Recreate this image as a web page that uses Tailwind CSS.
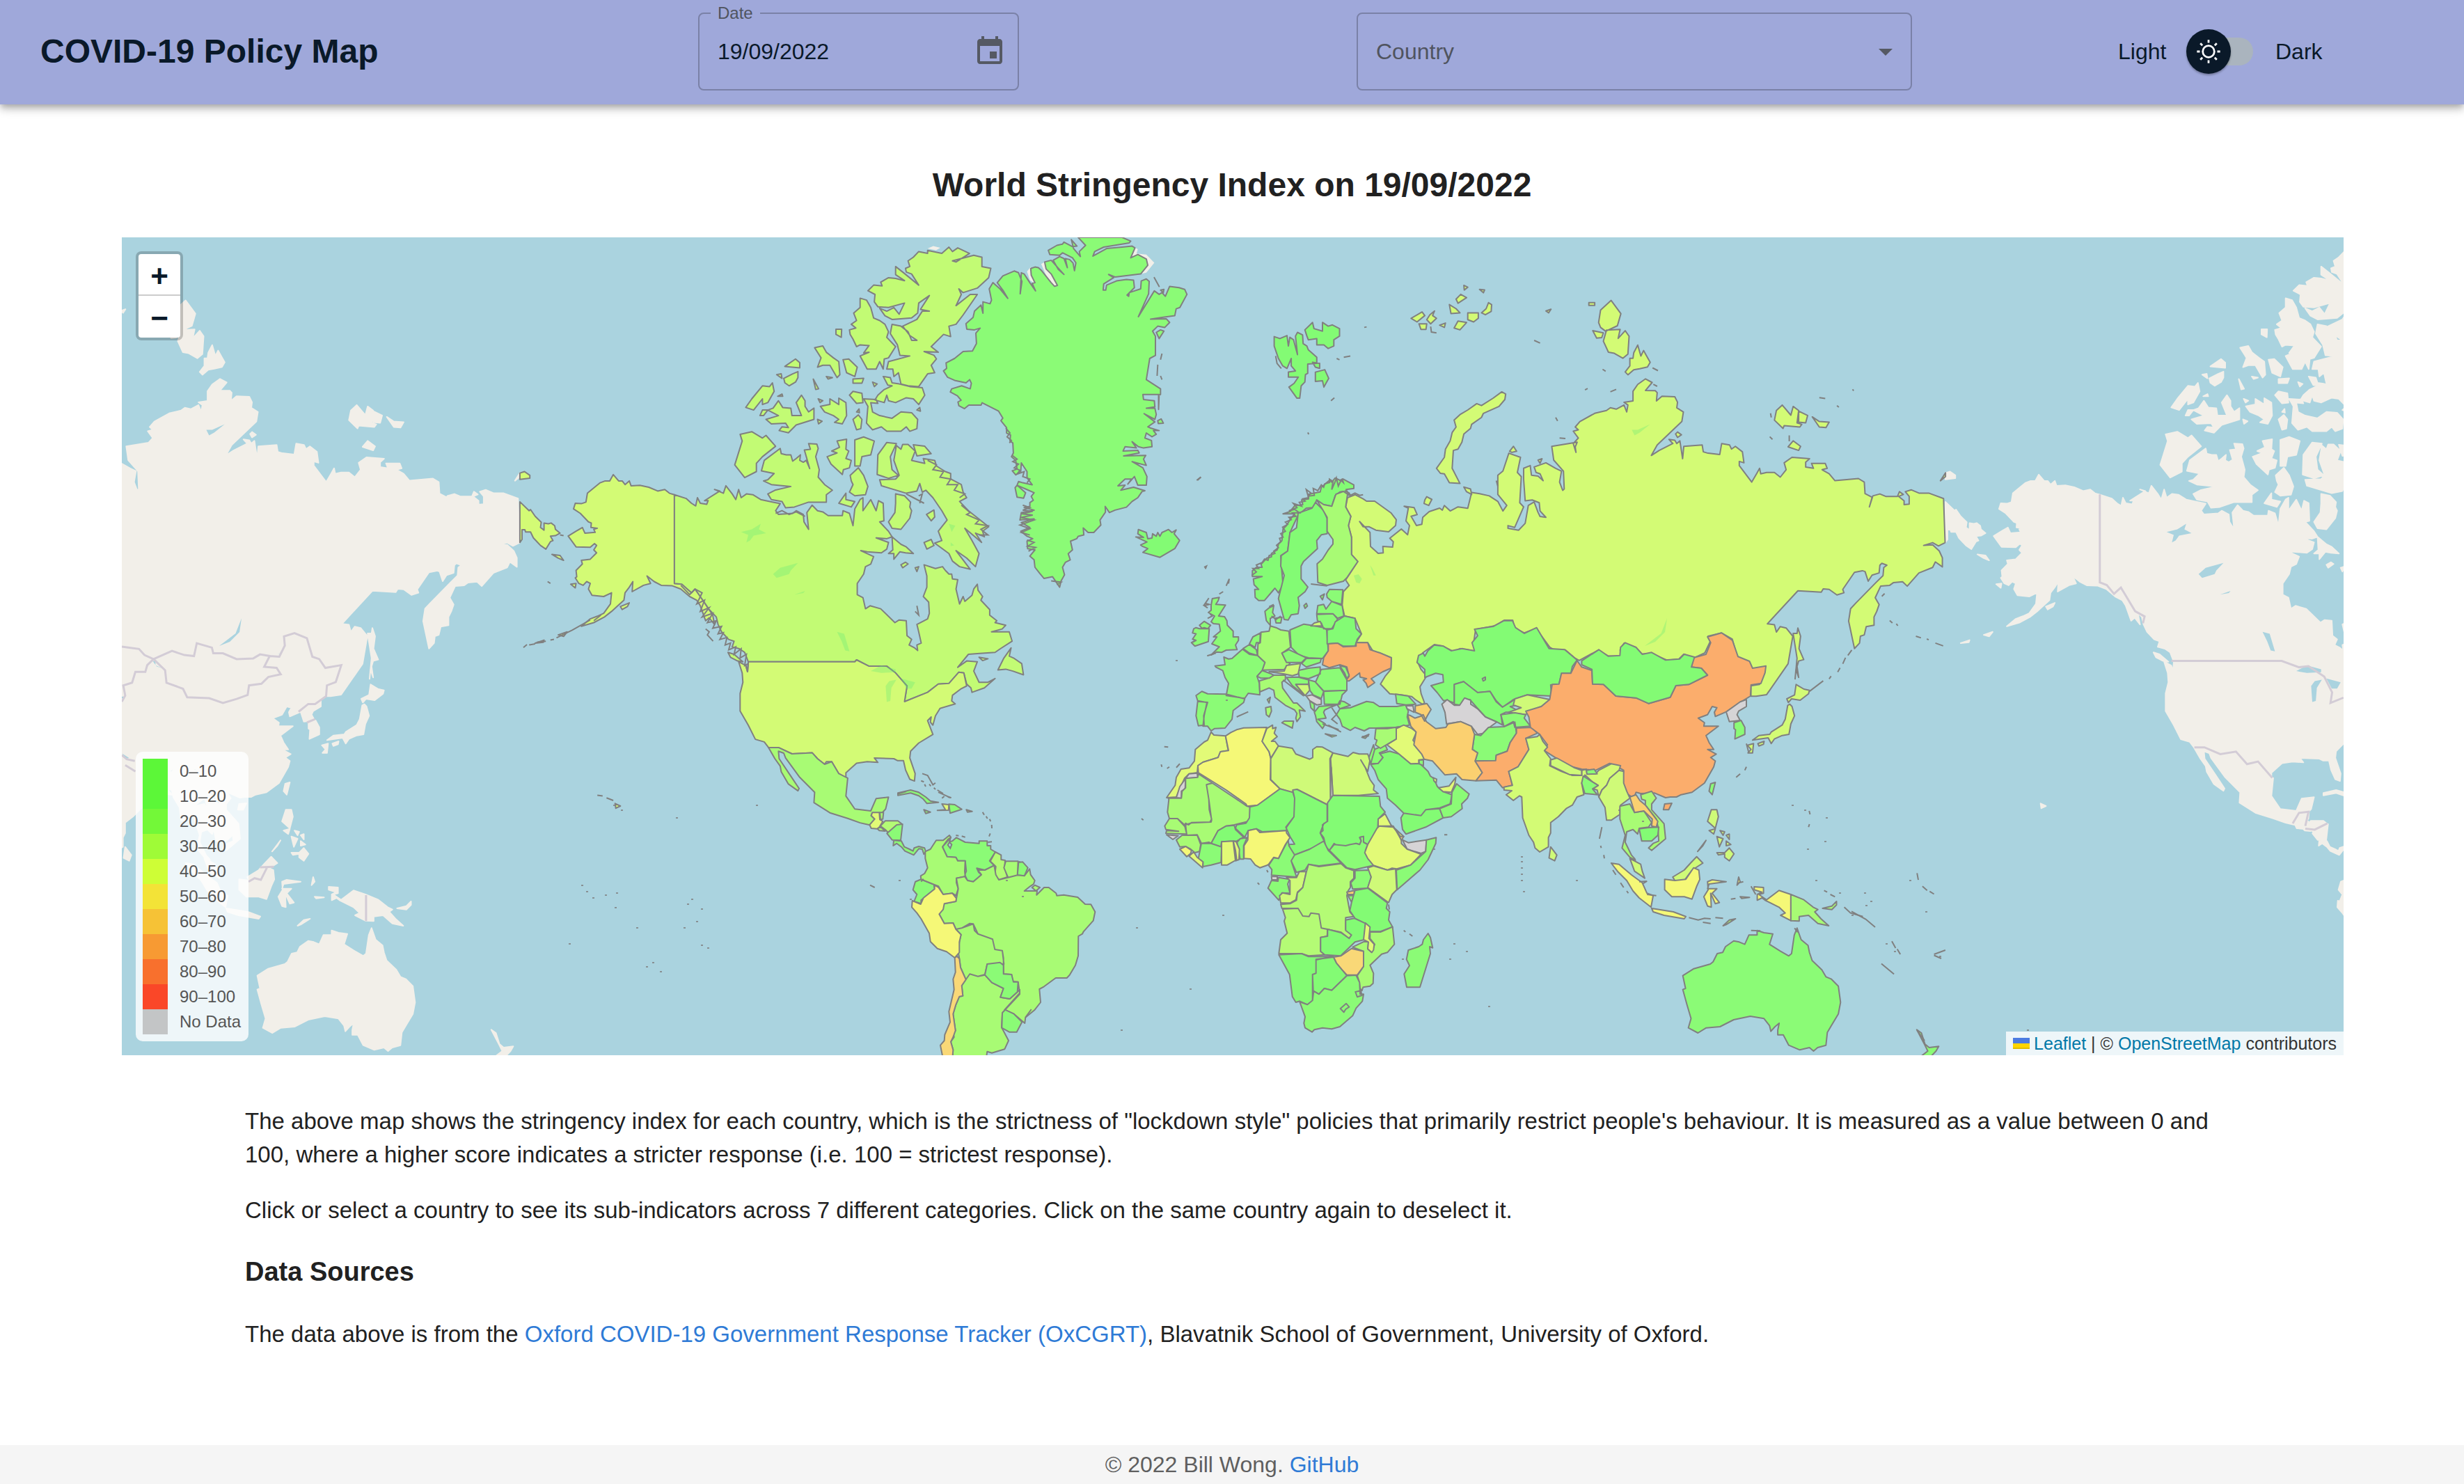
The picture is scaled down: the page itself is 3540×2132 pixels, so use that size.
<!DOCTYPE html>
<html lang="en">
<head>
<meta charset="utf-8">
<title>COVID-19 Policy Map</title>
<script src="https://cdn.jsdelivr.net/npm/@tailwindcss/browser@4"></script>
</head>
<body class="flex min-h-screen flex-col bg-white font-['Helvetica_Neue','Liberation_Sans',Arial,sans-serif] text-[32px] leading-[48px] text-[#212121]">

<header class="relative z-10 grid h-[150px] grid-cols-[945fr_946fr_1094fr_439fr] items-center bg-[#9fa8da] px-[58px] pb-[2px] text-[#0a1929] shadow-[0_4px_8px_-2px_rgba(0,0,0,0.2),0_8px_10px_rgba(0,0,0,0.14),0_2px_20px_rgba(0,0,0,0.12)]">
  <h1 class="text-5xl font-bold">COVID-19 Policy Map</h1>
  <fieldset class="mb-[18px] h-[123px] w-[461px] self-end rounded-lg border-2 border-black/23 pr-4 pl-4">
    <legend class="px-[10px] text-2xl leading-6 text-[#50545f]"><label for="date">Date</label></legend>
    <div class="flex h-[86px] items-center justify-between pl-[10px]">
      <input id="date" type="text" value="19/09/2022" class="w-[300px] bg-transparent outline-none">
      <button type="button" aria-label="Choose date" class="text-[#555963]">
        <svg class="size-12" viewBox="0 0 24 24" fill="currentColor"><path d="M17 12h-5v5h5v-5zM16 1v2H8V1H6v2H5c-1.11 0-1.99.9-1.99 2L3 19c0 1.1.89 2 2 2h14c1.1 0 2-.9 2-2V5c0-1.1-.9-2-2-2h-1V1h-2zm3 18H5V8h14v11z"/></svg>
      </button>
    </div>
  </fieldset>
  <div class="relative flex h-[112px] w-[798px] items-center rounded-lg border-2 border-black/23">
    <select aria-label="Country" class="h-full w-full appearance-none bg-transparent px-[26px] text-[#50545f] outline-none">
      <option>Country</option>
    </select>
    <svg class="pointer-events-none absolute right-3 size-12 text-[#555963]" viewBox="0 0 24 24" fill="currentColor"><path d="M7 10l5 5 5-5z"/></svg>
  </div>
  <div class="flex items-center">
    <span class="w-[98px]">Light</span>
    <label class="relative flex h-16 w-24 items-center">
      <input type="checkbox" aria-label="Dark mode" class="h-10 w-24 appearance-none rounded-full bg-[#aab4be]">
      <span class="absolute left-0 flex size-16 items-center justify-center rounded-full bg-[#0a1929] shadow-[0_2px_3px_rgba(0,0,0,0.3)]">
        <svg class="size-10" viewBox="0 0 20 20" fill="#fff"><path d="M9.305 1.667V3.75h1.389V1.667h-1.39zm-4.707 1.95l-.982.982L5.09 6.072l.982-.982-1.473-1.473zm10.802 0L13.927 5.09l.982.982 1.473-1.473-.982-.982zM10 5.139a4.872 4.872 0 00-4.862 4.86A4.872 4.872 0 0010 14.862 4.872 4.872 0 0014.86 10 4.872 4.872 0 0010 5.139zm0 1.389A3.462 3.462 0 0113.471 10a3.462 3.462 0 01-3.473 3.472A3.462 3.462 0 016.527 10 3.462 3.462 0 0110 6.528zM1.665 9.305v1.39h2.083v-1.39H1.666zm14.583 0v1.39h2.084v-1.39h-2.084zM5.09 13.928L3.616 15.4l.982.982 1.473-1.473-.982-.982zm9.82 0l-.982.982 1.473 1.473.982-.982-1.473-1.473zM9.305 16.25v2.083h1.389V16.25h-1.39z"/></svg>
      </span>
    </label>
    <span class="ml-8">Dark</span>
  </div>
</header>

<main class="flex-1">
  <h2 class="pt-[84px] text-center text-5xl leading-[64px] font-bold">World Stringency Index on 19/09/2022</h2>

  <section aria-label="World map" class="relative mt-[43px] mr-[173px] ml-[175px] h-[1175px] overflow-hidden bg-[#aad3df]">
    <svg id="map" class="block h-full w-full" viewBox="175 341 3192 1175" preserveAspectRatio="xMidYMid slice"></svg>

    <div class="absolute top-5 left-5 flex w-[68px] flex-col overflow-hidden rounded-lg border-4 border-black/20 bg-white bg-clip-padding text-[44px] font-bold text-[#0a1929]">
      <button type="button" aria-label="Zoom in" class="h-[60px] border-b-2 border-[#ccc] pt-1 leading-[56px]">+</button>
      <button type="button" aria-label="Zoom out" class="h-[60px] pt-1 leading-[56px]">−</button>
    </div>

    <div class="absolute bottom-5 left-5 flex w-[162px] flex-col rounded-[10px] bg-white/80 p-[10px] text-2xl leading-9 text-[#555]">
      <div class="flex gap-[17px]"><i class="size-9 bg-[#5cf738]"></i>0–10</div>
      <div class="flex gap-[17px]"><i class="size-9 bg-[#5cf738]"></i>10–20</div>
      <div class="flex gap-[17px]"><i class="size-9 bg-[#73f838]"></i>20–30</div>
      <div class="flex gap-[17px]"><i class="size-9 bg-[#9ffb37]"></i>30–40</div>
      <div class="flex gap-[17px]"><i class="size-9 bg-[#cefe36]"></i>40–50</div>
      <div class="flex gap-[17px]"><i class="size-9 bg-[#f3e337]"></i>50–60</div>
      <div class="flex gap-[17px]"><i class="size-9 bg-[#f6c236]"></i>60–70</div>
      <div class="flex gap-[17px]"><i class="size-9 bg-[#f79a33]"></i>70–80</div>
      <div class="flex gap-[17px]"><i class="size-9 bg-[#f8702d]"></i>80–90</div>
      <div class="flex gap-[17px]"><i class="size-9 bg-[#fa4728]"></i>90–100</div>
      <div class="flex gap-[17px] whitespace-nowrap"><i class="size-9 shrink-0 bg-[#c3c5c6]"></i>No Data</div>
    </div>

    <div class="absolute right-0 bottom-0 flex h-[34px] items-center gap-[6px] bg-white/80 px-[10px] text-[25px] leading-[34px] whitespace-nowrap text-[#333]">
      <svg class="h-4 w-6" viewBox="0 0 12 8"><path fill="#4C7BE1" d="M0 0h12v4H0z"/><path fill="#FFD500" d="M0 4h12v3H0z"/><path fill="#E0BC00" d="M0 7h12v1H0z"/></svg>
      <p><a href="#" class="text-[#0078a8]">Leaflet</a> | © <a href="#" class="text-[#0078a8]">OpenStreetMap</a> contributors</p>
    </div>
  </section>

  <section class="flex flex-col gap-8 pt-[71px] pr-[352px] pl-[352px] text-[33px]">
    <p>The above map shows the stringency index for each country, which is the strictness of "lockdown style" policies that primarily restrict people's behaviour. It is measured as a value between 0 and 100, where a higher score indicates a stricter response (i.e. 100 = strictest response).</p>
    <p>Click or select a country to see its sub-indicators across 7 different categories. Click on the same country again to deselect it.</p>
    <h3 class="mt-2 text-[38px] font-bold">Data Sources</h3>
    <p class="mt-[10px]">The data above is from the <a href="#" class="text-[#2f7bd6]">Oxford COVID-19 Government Response Tracker (OxCGRT)</a>, Blavatnik School of Government, University of Oxford.</p>
  </section>
</main>

<footer class="flex h-14 items-center justify-center bg-[#f5f5f5] text-[#5f5f5f]">
  <p>© 2022 Bill Wong. <a href="#" class="text-[#2f7bd6]">GitHub</a></p>
</footer>

<script>
// Survey sheets: origin and units per map pixel
const sheets = {
  3: [2218, 1060, 2.529, 3], 4: [700, 340, 1.96, 1.8667], 5: [1300, 340, 2.45, 2.8], 6: [1680, 640, 3, 3],
  7: [1640, 1020, 3, 3], 8: [1960, 400, 1.7818, 2.529], 9: [1980, 880, 2.24, 3], 10: [1240, 1120, 3, 3],
  11: [2660, 340, 2.2085, 1.3288], 12: [170, 340, 2.529, 2.063], 13: [170, 1060, 2.529, 3], 1: [0, 0, 0.44293, 0.44293]
};
const C = { c: '#c2fb74', u: '#d3fb75', g: '#8bfb76', m: '#a8fb74', s: '#83fb74', o: '#fbad6c', i: '#fbd070', y: '#f5f877', e: '#e2fa77', l: '#cffa78', n: '#d6d4d6', d: '#b4fb75', z: '#f9d877' };
// [fill key, sheet, outline]; "@n" changes sheet, "/" starts another outline
const countries = [
['u',4,`92,711 118,735 122,732 135,750 152,766 150,780 160,787 160,768 172,770 180,768 190,775 192,785 205,795 192,802 178,803 185,815 178,818 165,838 150,828 142,820 130,808 122,792 108,792 106,786 98,786 98,812 92,820 / 92,634 105,630 120,640 120,648 92,651`],
['u',4,`527,692 513,688 500,678 480,682 455,672 430,667 405,668 400,655 388,665 380,655 370,655 355,638 345,655 332,655 318,660 282,688 278,712 265,716 248,715 243,730 262,742 285,765 293,768 292,780 310,782 300,785 304,793 275,795 268,780 250,790 228,803 250,832 290,833 302,823 308,828 300,840 308,848 290,865 265,868 268,878 250,895 252,912 248,915 258,930 270,935 280,925 290,930 285,945 295,962 328,965 350,955 347,985 328,1010 310,1018 290,1025 265,1045 300,1035 330,1020 350,1005 365,992 385,975 388,955 400,940 410,925 408,952 440,935 460,930 450,910 470,925 490,935 520,936 545,945 570,965 590,975 600,990 615,1030 625,1022 640,1040 635,1015 600,965 585,945 575,955 548,932 527,930 / 375,992 400,982 395,992 380,1000 / 182,852 205,855 215,868 200,862 / 235,932 250,930 248,942 / 200,1068 225,1060 215,1072 / 135,1090 160,1082 158,1088 / 360,1520 375,1527 362,1533`],
['c',4,`527,692 560,702 575,715 587,722 592,700 600,715 618,718 622,708 612,708 655,682 640,678 665,688 672,668 690,690 700,705 708,678 715,700 730,690 748,692 770,705 805,712 825,716 812,735 820,745 860,742 870,735 890,745 892,765 905,785 900,740 915,720 930,735 945,738 960,748 1000,748 1002,735 1020,742 1030,775 1035,730 1050,705 1058,700 1058,735 1080,705 1095,735 1102,708 1115,715 1117,762 1105,765 1130,790 1140,805 1125,810 1095,808 1130,820 1125,838 1110,848 1070,845 1052,842 1088,858 1080,878 1065,885 1060,905 1042,930 1042,960 1058,968 1065,998 1078,990 1108,998 1148,1035 1160,1028 1180,1030 1182,1070 1195,1080 1188,1095 1202,1102 1212,1110 1210,1095 1222,1090 1215,1060 1210,1040 1240,1025 1245,1010 1243,980 1228,965 1238,940 1238,910 1230,880 1262,890 1282,885 1290,895 1300,905 1308,905 1310,918 1325,920 1320,945 1330,985 1340,965 1345,978 1365,962 1370,945 1380,932 1382,948 1395,965 1390,975 1415,1000 1415,1015 1435,1030 1430,1035 1460,1042 1450,1052 1420,1060 1470,1060 1478,1085 1445,1105 1430,1115 1380,1118 1355,1120 1325,1155 1350,1138 1380,1140 1370,1165 1385,1195 1410,1195 1430,1185 1400,1210 1365,1222 1362,1210 1350,1200 1342,1170 1328,1168 1300,1198 1270,1200 1240,1222 1175,1247 1182,1205 1150,1170 1125,1152 1075,1152 1040,1135 1035,1140 735,1140 725,1115 710,1105 690,1100 695,1085 680,1080 660,1060 650,1040 645,1020 625,1000 600,965 585,945 575,955 548,932 527,930`],
['c',4,`1178,85 1190,80 1185,65 1200,55 1215,40 1240,45 1240,37 1280,45 1300,28 1310,40 1325,30 1358,45 1320,68 1310,65 1370,50 1393,55 1393,80 1418,85 1412,110 1380,138 1340,150 1328,140 1335,155 1320,185 1360,155 1380,155 1340,210 1320,235 1300,240 1305,268 1285,262 1250,295 1270,310 1230,308 1258,318 1265,328 1250,345 1260,365 1240,368 1215,402 1185,400 1165,395 1158,365 1145,375 1142,355 1125,355 1130,335 1190,320 1162,318 1155,290 1135,260 1140,235 1165,240 1185,255 1195,278 1210,278 1190,265 1170,240 1210,222 1225,200 1245,200 1220,195 1245,158 1215,178 1212,205 1195,218 1140,222 1120,212 1105,192 1125,200 1145,190 1160,208 1175,178 1130,190 1100,188 1090,175 1092,155 1072,145 1088,130 1112,132 1108,122 1130,110 1150,112 1175,118 1150,102 1150,80 1170,95 1215,130 1195,100 1180,95 / 1050,165 1068,170 1080,190 1088,218 1105,225 1120,235 1130,255 1125,270 1150,295 1130,325 1118,328 1115,355 1105,335 1095,355 1070,355 1050,320 1075,310 1060,312 1075,292 1050,290 1040,295 1030,275 1022,262 1020,250 1038,245 1025,235 1040,225 1032,205 1050,190`],
['c',4,`1100,425 1118,410 1140,400 1128,398 1115,375 1135,378 1140,392 1160,395 1190,402 1225,405 1232,425 1215,450 1200,435 1180,432 1150,445 1130,440 1125,425 1118,445 1092,438 / 1060,435 1095,437 1100,447 1080,445 1085,470 1105,480 1140,487 1165,470 1195,472 1212,490 1210,515 1190,522 1180,510 1165,522 1125,522 1110,510 1085,518 1068,500 1072,455 / 1020,425 1030,415 1055,420 1058,445 1040,447 / 1030,490 1045,478 1055,490 1052,515 1040,518 / 938,455 965,450 965,435 990,450 990,433 1010,445 1012,480 1000,502 978,498 990,490 975,480 950,470 / 785,490 820,480 790,465 805,460 820,440 832,458 855,460 858,480 885,480 870,445 885,425 895,440 895,455 905,470 920,460 920,490 870,505 848,526 822,520 830,510 848,512 840,500 800,502 / 728,458 745,435 775,400 795,402 803,392 808,415 790,445 775,450 775,435 750,465 / 768,480 775,465 790,465 778,480 / 838,348 868,328 880,338 880,352 / 835,380 860,368 875,362 875,378 868,390 850,400 838,392 / 815,370 828,368 830,380 / 922,298 945,293 955,310 975,325 990,335 993,370 985,378 965,345 945,345 930,350 940,325 / 1002,330 1018,328 1042,350 1035,375 1012,365 / 982,248 998,248 997,270 982,262 / 1030,382 1060,380 1055,393 1030,393 / 918,382 933,408 925,410 / 955,375 972,378 960,382 / 1085,390 1098,395 1090,402 / 932,435 945,440 937,445 / 930,490 943,495 933,502 / 818,428 830,422 832,428 / 1040,470 1047,462 1048,472 / 1210,465 1218,458 1220,468`],
['c',4,`712,530 745,523 775,540 785,533 812,562 775,590 758,608 758,630 725,646 697,612 718,548 / 825,568 828,582 842,585 855,585 860,602 870,595 882,585 880,600 890,605 898,600 908,622 893,572 910,570 905,555 928,556 932,568 925,590 935,625 932,645 950,665 972,680 955,692 955,712 905,712 865,725 840,727 830,710 800,705 790,690 810,680 855,670 800,665 778,655 790,652 808,635 772,628 780,600 / 985,548 1012,543 1010,570 1018,575 1010,595 1025,600 1020,620 1003,625 1000,638 968,610 957,590 985,580 970,575 992,565 / 1035,545 1060,537 1090,548 1080,585 1055,590 1050,615 1035,615 / 1022,640 1045,620 1060,640 1072,670 1065,692 1035,695 1020,685 1030,665 1025,655 / 990,715 1010,688 1010,705 1035,710 1025,725`],
['c',4,`1152,560 1165,570 1170,557 1185,557 1205,575 1195,600 1232,608 1228,595 1260,600 1265,615 1290,630 1305,635 1305,650 1335,665 1340,685 1350,700 1330,710 1355,735 1375,750 1412,778 1395,790 1400,805 1375,795 1392,820 1345,782 1365,815 1385,850 1375,885 1350,862 1320,842 1360,892 1330,885 1310,870 1300,850 1260,822 1280,815 1270,790 1295,760 1280,735 1255,700 1235,680 1225,685 1218,662 1210,682 1180,688 1110,668 1105,652 1150,650 1160,640 1145,600 / 1100,585 1125,552 1152,555 1135,590 1140,625 1158,640 1130,648 1098,638 / 1200,558 1232,562 1250,582 1210,588 / 1150,690 1175,695 1192,712 1190,725 1195,735 1190,755 1165,785 1140,782 1130,765 1148,740 1150,715 / 1140,805 1165,825 1180,832 1200,850 1178,848 1162,845 1145,865 1145,850 1130,850 1142,840 / 1165,880 1178,873 1185,878 1170,888 / 1237,745 1258,733 1260,752 1250,762 / 1230,820 1250,812 1258,828 1238,838 / 1205,888 1215,885 1210,898 / 1475,1103 1470,1125 1482,1130 1505,1145 1510,1175 1480,1165 1460,1160 1438,1162 1455,1130 / 1385,1128 1410,1132 1395,1137 / 678,1115 695,1120 720,1140 705,1138 685,1128`],
['u',4,`735,1140 1035,1140 1040,1135 1075,1152 1125,1152 1150,1170 1182,1205 1175,1247 1240,1222 1270,1200 1300,1198 1328,1168 1342,1170 1350,1205 1335,1212 1310,1230 1308,1245 1318,1253 1275,1265 1262,1285 1255,1310 1248,1302 1250,1288 1240,1298 1245,1310 1255,1335 1215,1358 1192,1380 1190,1398 1205,1440 1203,1460 1190,1455 1178,1430 1172,1405 1155,1405 1145,1400 1090,1398 1100,1410 1070,1408 1040,1412 1010,1438 1010,1452 990,1440 970,1408 955,1408 950,1415 930,1400 915,1384 858,1387 820,1370 792,1370 780,1355 755,1348 735,1310 712,1272 712,1225 720,1195 718,1170 708,1140 728,1150 733,1165`],
['m',4,`792,1370 820,1370 858,1387 915,1384 930,1400 950,1415 970,1408 990,1440 1015,1452 1010,1500 1035,1535 1080,1540 1095,1507 1130,1503 1122,1535 1112,1545 1084,1545 1081,1553 1091,1562 1077,1578 1050,1572 1015,1560 965,1545 920,1518 922,1490 880,1450 840,1398 835,1385 820,1380 822,1400 850,1440 878,1480 875,1486 848,1468 828,1435 825,1420 810,1400`],
['g',5,`610,3 636,35 614,60 618,80 594,48 586,12 606,38 590,40 560,22 555,30 535,35 505,55 510,72 545,75 555,65 590,85 602,105 597,137 592,106 580,92 565,88 572,125 560,88 545,80 522,95 540,132 560,152 515,95 492,102 497,130 515,150 537,196 527,200 515,185 480,135 470,125 458,122 443,128 445,155 458,185 448,188 460,218 440,185 420,150 410,145 406,230 412,180 400,145 385,138 345,158 325,185 345,215 362,248 335,210 310,185 297,210 305,255 300,270 275,262 275,308 268,275 245,300 240,325 215,350 218,372 245,375 265,368 250,388 252,430 238,460 205,462 175,490 145,508 147,530 136,540 150,565 175,578 215,588 228,575 234,590 230,612 200,600 165,612 160,625 185,640 198,658 187,665 190,680 210,692 225,678 268,678 272,668 330,702 345,730 338,740 358,768 358,790 372,798 370,822 380,830 382,870 375,885 390,900 395,935 378,942 390,958 408,945 410,910 430,945 430,970 448,998 415,990 400,985 395,1000 425,1015 455,1030 445,1045 452,1060 440,1070 440,1085 420,1090 455,1100 410,1110 405,1140 455,1135 410,1150 440,1170 408,1185 430,1205 450,1215 430,1225 432,1255 458,1260 440,1285 455,1300 458,1330 475,1355 490,1375 520,1368 530,1385 545,1410 550,1385 562,1360 555,1330 565,1310 582,1300 575,1275 590,1260 583,1225 605,1215 610,1205 630,1200 628,1172 645,1190 665,1190 690,1160 687,1140 706,1108 705,1085 720,1110 740,1100 780,1088 800,1065 820,1050 835,1025 845,1022 805,1008 760,1020 775,1000 750,1002 775,975 798,975 785,995 808,965 820,1000 850,1000 852,965 838,930 800,905 850,920 840,895 848,880 770,882 825,870 820,860 768,862 775,845 815,850 800,825 822,845 840,850 870,845 868,820 845,810 850,790 870,805 885,795 875,780 895,780 865,770 855,765 880,745 842,712 880,735 885,715 880,690 850,690 880,685 878,660 840,655 838,635 895,635 893,695 893,638 900,635 900,612 850,575 862,490 882,478 882,400 872,380 890,360 915,365 932,345 920,330 865,332 905,325 950,318 955,290 968,285 993,232 985,212 965,205 932,200 917,240 905,225 895,232 878,218 822,322 858,230 860,180 850,170 832,178 830,210 790,225 788,240 782,235 808,205 805,175 780,172 745,178 710,195 707,215 698,215 700,190 735,165 717,152 740,162 830,150 855,115 850,90 820,72 795,85 810,45 800,38 765,42 710,48 662,78 668,60 700,42 790,25 795,18 765,3 / 885,385 900,375 912,380 895,410 / 388,1010 395,1000 425,1030 418,1052 395,1048 / 900,215 912,212 910,225 / 878,165 895,200 / 890,740 902,733 910,750 892,752`],
['s',5,`813,1208 840,1210 820,1195 822,1178 850,1190 855,1215 870,1212 872,1195 885,1205 890,1190 898,1205 905,1190 928,1178 940,1190 955,1180 948,1195 967,1222 950,1255 898,1290 838,1270 855,1255 835,1245 830,1240 852,1228 / 1300,402 1320,410 1345,398 1350,440 1355,405 1368,415 1382,475 1375,400 1382,385 1400,395 1402,430 1415,440 1420,455 1450,485 1450,510 1418,512 1418,550 1410,555 1408,585 1395,600 1390,650 1380,650 1352,605 1370,590 1385,565 1350,565 1350,545 1375,540 1360,520 1360,490 1345,530 1330,520 1315,490 1300,440 / 1408,375 1435,345 1440,370 1470,380 1470,345 1490,360 1505,355 1530,370 1530,400 1510,415 1510,440 1490,450 1475,435 1450,435 1450,410 1420,415 1415,400 / 1445,545 1478,535 1492,570 1475,605 1470,580 1445,582 / 1435,505 1460,510 1460,530 1445,525`],
['u',6,`768,225 800,212 835,230 850,240 885,240 955,290 978,320 975,345 945,372 890,365 860,350 835,350 820,328 865,375 867,435 900,465 922,463 920,435 962,438 965,415 950,400 1000,360 1027,385 1035,345 1020,325 1030,270 1012,262 1055,268 1068,298 1042,305 1065,345 1088,340 1092,310 1120,285 1165,270 @8 200,842 205,825 220,845 240,830 265,835 275,778 295,782 320,790 342,810 355,845 365,825 342,785 342,715 355,700 370,635 400,650 392,705 402,720 398,815 408,830 385,905 368,898 368,908 395,915 412,890 420,825 435,812 445,850 450,865 465,868 450,845 448,815 430,805 412,808 408,730 408,690 425,680 428,715 445,718 458,735 450,710 440,705 435,685 465,670 490,690 505,700 500,740 508,770 512,765 510,700 485,660 480,610 545,595 540,612 542,632 535,600 548,580 535,555 548,550 540,540 552,520 590,490 620,480 630,470 645,475 665,460 672,485 675,460 665,450 688,445 688,410 700,385 720,365 737,378 720,407 745,408 750,415 748,445 762,428 795,430 802,450 800,470 817,485 813,520 750,605 735,643 755,625 790,600 780,585 795,588 800,600 808,590 815,655 818,610 865,605 868,630 880,635 910,640 915,600 935,605 940,620 950,610 968,630 972,670 960,665 960,680 992,740 1005,708 1012,690 1015,710 1030,705 1050,705 1065,722 1080,695 1075,670 1095,650 1140,655 1130,668 1130,685 1150,690 1145,672 1180,672 1185,690 1172,695 1190,710 1205,735 1265,727 1280,740 1282,782 1300,795 1293,830 1302,790 1320,783 1335,792 1365,792 1370,775 1380,785 1368,792 1382,808 1382,822 1395,820 1395,792 1385,775 1400,768 1420,780 1445,780 1483,800 1487,960 1470,972 1455,960 1432,970 1455,968 1472,990 1480,1015 1480,1048 1462,1030 1455,1050 1420,1070 1390,1118 1378,1102 1355,1105 1345,1115 1322,1118 1308,1160 1318,1185 1312,1210 1305,1230 1305,1260 1285,1265 1280,1295 1270,1300 1268,1325 1255,1345 1240,1245 1245,1200 1258,1180 1310,1105 1328,1080 1330,1050 1338,1042 1325,1035 1320,1042 1318,1070 1300,1078 1290,1100 1282,1065 1275,1062 1255,1068 1225,1130 1228,1142 1210,1150 1190,1130 1175,1128 1170,1140 1148,1138 1110,1135 1032,1255 1050,1258 1055,1285 1065,1265 1080,1270 1097,1300 1085,1400 1030,1512 1003,1518 990,1518 990,1480 1012,1475 1025,1415 992,1418 985,1392 955,1375 942,1310 915,1288 880,1300 888,1312 872,1360 845,1378 818,1365 805,1383 775,1387 735,1362 710,1365 695,1340 665,1325 655,1350 658,1372 625,1372 600,1350 550,1388 540,1380 515,1350 485,1348 475,1340 440,1272 410,1288 385,1270 380,1242 358,1242 335,1262 285,1275 280,1325 288,1355 245,1345 228,1355 200,1335 180,1330 150,1360 137,1395 145,1420 160,1445 @6 1105,1000 1080,1040 1085,1070 1100,1110 1090,1115 1060,1095 1045,1082 1000,1075 950,1070 910,1028 930,995 955,965 957,915 905,893 880,890 855,850 805,850 828,812 800,745 755,735 745,690 750,630 775,603 760,580 812,500 785,470 785,395 772,345 782,305 760,265`],
['u',8,`185,690 205,650 208,620 220,590 225,560 235,540 230,515 245,495 265,478 288,455 300,462 330,435 352,412 362,420 360,440 345,465 305,490 300,505 275,530 272,545 255,565 250,595 240,620 228,625 225,690 245,745 218,742 205,710 195,708 / 632,80 657,128 648,172 618,192 605,178 600,160 605,115 / 620,188 655,185 650,218 668,190 678,210 675,275 662,290 640,272 625,268 612,228 / 700,242 708,282 715,262 732,305 725,322 705,328 690,332 675,350 668,340 680,318 680,290 688,290 690,270 / 585,190 612,198 608,215 595,217 / 1070,460 1092,497 1098,465 1112,480 1108,525 1120,530 1115,540 1075,535 1072,545 1050,515 1055,480 / 1112,482 1135,498 1130,525 1112,522 / 1147,503 1165,520 1190,522 1182,542 1165,540 / 1085,612 1098,590 1117,610 1112,625 / 265,125 292,125 292,145 280,158 265,150 / 300,125 312,110 318,88 326,95 325,120 310,132 / 120,145 148,122 155,135 135,158 / 140,165 160,165 158,185 145,185 / 160,150 168,132 180,118 175,135 185,145 170,165 / 230,180 240,155 262,160 245,187 / 235,75 247,58 262,70 240,90 / 218,95 235,110 245,125 222,128 / 193,170 208,162 205,178 / 255,25 265,32 256,42 / 295,40 308,42 305,52 / 465,118 478,112 472,125 / 575,88 590,88 590,98 575,98 / 155,805 160,793 173,803 165,825 153,818 / 1098,1290 1108,1290 1110,1270 1117,1300 1113,1345 1125,1385 1112,1390 1108,1410 1112,1450 1105,1420 1103,1455 1108,1380 / 1488,706 1488,720 1475,735 / 255,758 272,765 275,785 262,775 / 372,628 382,610 390,628 378,632 / 797,565 802,558 812,568 802,578 / 445,660 455,655 450,672`],
['s',6,`370,655 368,620 385,620 365,600 362,575 400,565 358,565 358,540 375,525 400,525 395,512 420,485 440,480 440,465 465,450 470,425 485,410 490,360 505,345 520,320 540,295 490,295 520,285 540,260 575,255 570,235 600,230 600,210 650,200 655,180 690,150 700,158 715,140 735,150 750,145 795,170 795,185 762,190 775,215 750,198 735,200 715,215 700,262 665,255 635,235 620,268 590,270 555,300 520,375 510,455 480,475 485,545 490,600 470,635 455,615 410,668 385,668`],
['s',6,`555,292 615,270 630,245 665,280 680,315 680,380 655,385 635,410 638,445 578,500 568,520 568,575 597,610 585,630 555,655 560,690 555,725 525,730 512,752 495,750 470,660 475,640 485,600 495,560 480,520 482,475 510,455 520,375 548,355 / 580,690 590,680 595,692 585,702`],
['m',6,`635,235 665,255 700,262 718,210 750,198 768,210 760,265 782,305 772,345 785,395 785,470 812,500 765,570 750,585 680,603 640,590 637,510 660,490 685,450 705,425 705,405 680,370 680,310 660,275`],
['g',6,`412,715 430,700 450,690 445,720 455,735 435,745 435,775 418,755 / 455,745 485,740 480,765 460,765 / 678,640 690,620 748,622 742,685 700,672 680,655 / 640,690 665,685 675,705 700,672 745,690 752,735 725,745 705,725 635,725 / 635,728 705,725 725,748 700,790 665,790 655,765 638,755 / 520,795 580,770 610,775 665,785 678,795 682,845 685,885 660,918 600,915 560,905 525,870 / 650,650 668,640 660,665`],
['s',6,`680,795 705,790 715,760 755,735 800,745 805,790 828,812 810,835 800,865 750,865 725,852 680,855`],
['u',6,`610,778 625,765 650,758 658,778`],
['o',6,`685,855 725,852 750,868 805,865 805,850 855,850 865,880 905,893 957,915 955,960 920,975 870,1005 885,1022 855,1043 848,1025 835,1010 850,1005 822,998 820,980 795,1000 775,1015 760,1015 775,995 765,955 735,945 690,958 660,945 665,915 685,885`],
['m',6,`395,805 430,800 435,778 460,785 480,795 515,800 522,870 485,895 500,925 520,940 495,965 400,968 412,935 380,905 382,855 392,850`],
['g',6,`345,855 360,825 392,808 390,850 375,850 370,870 / 318,875 345,858 375,880 380,905 345,895 / 197,950 240,945 235,912 255,920 270,918 315,878 345,900 380,905 412,935 400,970 378,995 388,1025 390,1075 340,1068 325,1090 245,1078 255,1025 240,1000 230,970 200,955 / 115,1078 140,1060 165,1070 245,1072 325,1092 320,1108 275,1142 270,1180 240,1218 195,1220 180,1230 165,1210 145,1210 150,1165 162,1108 122,1100 / 122,1103 165,1107 148,1165 150,1205 125,1208 115,1165 / 185,660 215,655 210,670 200,685 242,688 225,715 212,735 238,738 248,755 250,775 275,800 275,825 298,825 298,840 285,860 292,880 245,882 225,892 205,890 180,903 215,868 183,855 205,825 190,825 220,800 215,770 190,768 180,760 195,735 168,720 180,710 180,690 / 105,790 115,785 130,790 150,790 172,790 168,845 110,865 95,850 115,840 100,835 115,812 100,808 / 130,775 150,758 178,775 165,790 150,785 140,788`],
['m',6,`388,1015 420,1005 450,990 500,990 500,1010 485,1020 488,1045 535,1110 550,1110 585,1145 560,1140 565,1170 550,1190 545,1175 550,1155 540,1140 500,1120 455,1085 450,1055 430,1045 390,1062 / 485,1195 495,1188 535,1188 530,1218 / 415,1130 438,1125 440,1145 430,1170 418,1160 / 422,1095 435,1085 430,1110`],
['g',6,`378,995 400,970 440,985 450,990 430,1003 395,1003 / 485,895 515,880 590,915 570,935 505,935 / 570,940 590,918 655,918 650,935 590,955 / 555,970 600,960 650,955 650,985 600,1005 560,998 / 655,965 735,958 765,1010 765,1055 665,1058 630,1020 / 735,950 760,955 775,990 765,1005 755,980 / 665,1060 765,1055 745,1075 740,1095 735,1115 668,1115 / 600,1010 628,1018 665,1060 655,1090 620,1075 605,1055 / 505,1000 555,998 600,1010 600,1028 545,1030 580,1075 530,1035 / 605,1100 625,1115 625,1145 610,1130 / 625,1150 645,1125 720,1118 690,1130 670,1140 665,1150 675,1175 640,1180 665,1195 672,1200 660,1220 635,1190 630,1165 / 672,1243 695,1248 720,1250 700,1256 / 725,1120 735,1100 755,1105 780,1120 735,1135`],
['l',6,`430,975 495,972 505,948 565,940 555,985 530,992 495,985 / 545,1030 600,1030 605,1055 585,1078`],
['n',6,`590,1080 615,1075 655,1095 655,1115 635,1118 605,1100`],
['g',6,`735,1135 780,1130 850,1103 880,1108 905,1125 980,1125 1018,1118 1030,1145 1025,1170 1035,1205 975,1215 885,1218 862,1218 840,1230 800,1215 780,1228 745,1210 735,1180 720,1160 / 830,1258 860,1245 845,1262 / 975,1072 1030,1080 1062,1115 1020,1118 980,1112`],
['n',6,`1020,1122 1050,1122 1055,1150 1025,1135`],
['e',7,`300,95 312,108 362,112 372,165 375,175 340,180 330,205 265,225 243,240 240,270 205,275 185,295 150,375 108,378 145,325 150,290 170,255 205,250 228,220 232,170 270,138 285,130`],
['n',7,`240,272 242,292 190,295 188,340 172,350 172,380 150,378 165,330 205,275`],
['y',7,`362,112 385,97 410,85 440,77 540,75 520,135 550,180 557,210 555,300 597,340 500,410 455,415 450,405 365,345 245,270 243,240 265,225 330,205 340,180 375,175`],
['e',7,`540,80 565,65 565,80 580,75 572,100 585,115 560,135 575,135 590,155 557,208 550,180 520,135`],
['l',7,`590,155 650,165 665,190 725,212 738,205 738,170 755,158 780,160 825,185 812,210 815,400 800,408 670,342 645,355 597,340 557,300 557,210`],
['l',7,`825,185 890,200 912,183 938,190 975,190 985,215 975,265 960,240 945,215 965,250 985,300 1003,325 1000,345 1020,360 935,368 825,368 815,210`],
['n',7,`815,240 818,250 825,370 818,400 815,400`],
['m',7,`190,295 242,290 245,275 305,315 280,322 290,385 292,430 302,470 295,483 215,485 203,495 190,488 185,500 155,468 120,468 112,440 118,385 115,380 172,380 175,350 190,335 / 305,315 280,322 290,385 302,475 300,483 215,487 190,495 195,540 240,538 258,575 290,570 300,575 330,520 365,500 400,495 460,480 468,465 467,418 455,415 400,378 / 100,500 120,468 155,468 185,495 195,535 105,532 108,520 160,523 105,515 / 150,560 175,540 240,540 255,580 250,610 230,615 212,600 190,588 165,590`],
['s',7,`467,418 500,410 597,340 652,355 660,380 657,460 625,505 625,520 520,525 495,512 460,520 445,548 405,510 410,495 450,488 465,465 / 652,345 670,342 800,408 800,480 780,495 782,520 770,530 790,570 725,600 660,625 640,600 635,580 660,578 640,545 622,505 657,460 660,380 / 802,408 802,400 825,368 1025,372 1030,415 1050,440 1020,470 1018,515 975,580 957,570 957,545 940,550 947,565 940,580 925,575 900,585 845,588 830,575 810,605 795,590 785,550 770,530 785,490 802,480 / 300,575 330,520 365,500 400,497 405,515 440,548 410,565 345,568 342,590`],
['g',7,`810,605 830,580 880,585 900,580 925,575 940,580 947,565 942,548 957,545 957,570 975,580 965,605 980,630 1000,670 920,688 885,680 / 245,640 258,575 300,575 345,590 343,657 300,668 265,675 265,655 / 412,570 425,555 455,550 440,585 440,643 425,643 / 548,670 570,637 590,640 632,560 635,585 660,625 645,650 668,720 560,712 562,688 / 660,625 725,600 785,565 805,605 860,660 765,672 720,665 705,690 668,700 645,650 / 590,722 638,730 630,750 640,790 605,788 592,820 545,768 560,735 588,738 / 920,692 980,690 990,720 975,768 910,772 902,745 920,725`],
['n',7,`108,538 158,542 135,558 / 560,718 585,718 585,732 562,732 / 1125,560 1150,572 1228,560 1225,610 1205,618 1145,600`],
['y',7,`165,600 190,588 215,605 212,618 195,632 / 460,520 495,512 510,528 625,520 625,530 640,550 620,580 605,610 590,640 570,635 548,665 540,670 510,680 490,668 470,642 442,640 442,585 458,560`],
['e',7,`205,630 225,612 240,635 265,655 263,680 / 345,568 395,565 405,605 410,645 370,668 345,668 / 395,565 408,568 422,600 420,645 405,650 / 1015,510 1025,500 1085,500 1120,560 1120,575 1145,600 1205,622 1160,668 1100,685 1080,682 1060,690 1000,670 975,640 962,615 975,580 / 1020,470 1050,448 1075,495 1130,545 1120,550 1085,505 1020,500`],
['l',7,`625,722 668,722 680,697 710,697 695,765 672,785 665,818 640,832 600,832 595,800 608,788 640,795 640,735 / 975,680 1000,672 1060,690 1095,685 1100,775 1080,795 1065,830 975,765 990,720`],
['d',7,`720,665 765,675 860,662 880,680 915,692 915,725 900,740 900,765 890,780 885,800 898,870 915,890 880,895 880,945 905,970 895,985 860,958 800,945 775,940 765,880 730,875 722,890 695,888 675,855 605,855 600,838 640,835 668,820 672,788 695,765 710,700 / 608,858 675,855 695,888 722,890 730,875 765,880 775,940 802,945 800,975 772,980 772,1040 790,1055 720,1060 690,1050 592,1050 600,990 628,962 615,910 620,895`],
['g',7,`1228,560 1270,550 1268,575 1235,645 1200,690 1102,775 1098,690 1160,668 1225,610 / 890,800 915,800 905,828`],
['s',7,`920,778 975,768 1060,832 1055,855 1070,870 1065,905 1082,935 1030,955 985,955 965,920 920,898 898,865 905,830 / 880,905 918,898 965,920 960,990 920,1000 858,1060 790,1055 772,1040 772,980 802,975 802,945 860,960 895,985 905,970 880,950 / 592,1055 690,1050 720,1063 825,1062 752,1077 752,1135 737,1140 737,1255 715,1270 682,1255 665,1260 650,1235 638,1140 / 752,1075 828,1065 840,1090 865,1120 885,1145 820,1208 788,1200 765,1225 740,1210 737,1140 752,1135`],
['i',7,`885,785 918,778 915,795 890,795 / 1112,545 1130,545 1120,562`],
['m',7,`985,957 1030,957 1082,935 1090,1010 1060,1045 1035,1052 985,1100 1000,1135 998,1178 985,1190 955,1195 950,1210 942,1200 938,1170 930,1145 957,1105 957,1040 910,1022 960,998 978,1000 975,1030 992,1045 1005,1010 985,985`],
['e',7,`965,918 985,935 980,985 1003,1010 1000,1035 992,1045 975,1030 978,1000 957,990`],
['z',7,`828,1065 860,1060 905,1028 957,1040 957,1105 930,1142 885,1142 865,1120 840,1090`],
['g',7,`682,1258 715,1270 737,1252 742,1212 765,1225 788,1200 820,1208 885,1145 925,1143 940,1175 942,1225 957,1225 952,1255 925,1285 910,1318 855,1365 820,1375 780,1370 745,1378 735,1388 705,1370 700,1350 705,1322 / 857,1287 882,1265 895,1280 880,1290 872,1303 / 922,1215 945,1210 950,1230 930,1237 / 1235,963 1245,980 1255,1025 1242,1020 1245,1050 1200,1195 1143,1195 1132,1138 1155,1102 1142,1075 1150,1035 1195,1020 1210,1010 1215,990`],
['s',7,`988,235 1020,230 1040,205 1025,190 1070,178 1110,190 1160,232 1200,232 1215,245 1235,265 1245,285 1260,295 1275,330 1300,352 1338,365 1330,405 1285,422 1225,430 1205,455 1130,445 1095,410 1060,380 1055,340 1020,300 1005,260 / 1130,445 1205,455 1225,430 1285,425 1300,465 1225,505 1140,535 1125,515 1118,465`],
['g',7,`1358,318 1412,362 1405,380 1380,405 1382,425 1335,460 1300,465 1285,425 1335,405 1338,355 / 1005,170 1050,150 1060,172 1025,185 1040,205 1020,230 988,232 / 1000,150 1005,170 988,232 980,205 / 1195,215 1215,215 1215,240 1197,232`],
['e',7,`1280,335 1325,328 1355,290 1350,320 1335,355 1300,352 / 1258,292 1272,298 1270,315 1260,305 / 1098,80 1130,65 1165,80 1185,95 1170,130 1200,170 1220,212 1195,215 1195,230 1160,232 1110,190 1058,150 1098,125`],
['m',7,`1010,80 1060,80 1115,72 1098,80 1098,125 1030,165 1008,150 1015,130 1005,125`],
['s',9,`130,185 145,175 150,188 160,165 180,140 210,145 235,165 270,155 310,165 302,130 320,100 310,72 370,60 405,35 432,35 442,65 470,90 510,65 550,155 600,160 640,205 625,232 620,262 590,262 582,308 555,312 558,360 480,355 435,375 400,408 380,380 360,340 320,345 275,298 245,310 245,390 220,378 210,380 190,345 170,315 210,300 208,268 185,262 150,280 150,245 125,215 / 335,285 345,278 345,290 338,295`],
['s',9,`245,310 275,298 320,345 360,340 380,385 400,408 440,375 445,400 425,405 460,430 410,430 395,440 400,485 380,470 345,450 318,410 295,375 275,375 265,400 245,395`],
['n',9,`205,395 222,375 245,400 262,400 278,368 298,378 298,395 320,415 345,450 382,472 358,495 350,518 320,525 300,490 265,470 220,480 215,430`],
['l',9,`440,372 480,355 552,375 525,405 485,425 475,440 420,430 460,410 435,398`],
['g',9,`395,440 440,432 475,440 470,455 490,490 440,495 435,470 405,492 / 310,525 330,530 355,495 405,492 440,472 445,520 425,560 415,598 380,615 378,638 312,640 320,605 303,590`],
['i',9,`95,440 105,445 118,455 135,448 145,440 155,470 185,500 218,495 225,480 265,470 300,490 310,525 303,590 320,605 312,640 335,690 315,725 270,720 252,695 215,700 175,640 148,632 140,610 115,570 122,515 105,490 @6 / 1060,1122 1110,1112 1128,1138 1112,1165 1100,1188 1085,1160 1060,1150`],
['o',9,`312,640 378,638 380,615 415,598 425,560 445,520 445,498 495,495 512,520 475,542 485,590 450,665 420,685 432,745 400,755 380,722 315,725 335,690`],
['o',9,`640,207 655,235 688,250 690,308 725,310 765,360 830,368 870,392 940,365 958,315 1000,310 1060,270 1040,240 1008,235 1015,195 1055,180 1070,130 1060,105 1105,88 1140,120 1158,190 1195,210 1205,240 1248,230 1245,260 1232,305 1200,312 1198,360 1168,385 1120,428 1085,448 1082,430 1090,410 1075,405 1060,440 1030,455 1050,475 1048,490 1095,490 1055,530 1065,560 1080,590 1060,590 1088,610 1070,625 1085,640 1080,665 1050,735 1010,775 975,785 960,795 940,795 925,798 890,778 845,780 830,775 822,800 800,780 785,740 790,680 770,665 745,650 700,680 655,675 610,660 570,625 535,595 545,570 520,525 490,495 485,450 475,425 525,405 552,375 560,310 582,308 590,262 620,262 / 922,825 945,822 935,850 918,850`],
['s',9,`655,208 710,160 740,188 778,185 780,150 795,130 830,150 850,180 880,172 925,205 970,200 985,180 1018,192 1008,235 1040,240 1060,270 1000,310 958,315 940,365 870,392 830,368 765,360 725,310 690,308 688,245 655,225`],
['u',9,`475,542 512,535 520,525 530,555 545,580 535,595 555,630 552,660 590,685 625,702 655,702 655,680 670,675 672,695 700,695 710,680 750,652 780,660 775,680 745,715 735,745 720,765 710,795 705,765 690,760 708,745 690,730 665,700 655,735 662,785 640,795 625,830 605,845 580,880 555,905 555,950 548,970 548,1010 520,1032 505,1015 500,990 485,960 465,885 462,795 455,790 435,810 412,785 430,768 405,765 405,752 432,745 420,685 450,665 485,590`],
['l',9,`555,635 575,627 630,668 655,680 655,702 615,698 555,660 / 555,1010 575,1045 568,1070 550,1058`],
['g',9,`670,680 695,675 705,695 672,697 / 660,705 690,730 708,745 690,760 705,785 665,780 655,735 / 1145,475 1168,465 1180,495 1180,525 1148,545 1150,505 1145,500 / 1070,738 1085,732 1075,785 1065,770`],
['n',9,`1120,428 1165,385 1185,375 1185,405 1160,425 1155,440 1165,465 1130,470`],
['u',9,`1325,395 1332,405 1340,445 1328,480 1322,525 1300,530 1275,545 1265,565 1255,540 1205,550 1225,530 1260,525 1265,515 1300,485 1310,460 1318,400 / 1345,310 1370,330 1388,335 1385,350 1358,378 1330,372 1320,388 1315,372 1340,355 / 1188,572 1208,565 1205,605 1190,605 1200,590 / 1222,565 1242,555 1240,568 1225,575`],
['l',9,`745,715 775,680 790,685 790,735 800,770 810,800 780,830 778,870 750,895 735,895 730,840 710,795 720,765 735,745 / 810,1060 845,1085 850,1115 858,1145 825,1115 / 948,1140 985,1110 1005,1080 1025,1052 1045,1080 1010,1110 985,1155 955,1155 / 1072,850 1090,850 1095,880 1085,930 1060,900 / 1090,1035 1115,1035 1130,1015 1145,1040 1130,1070 1115,1055 1115,1040 1095,1045 / 1065,940 1085,932 1080,955 / 1090,965 1110,975 1098,1010 / 1120,960 1130,955 1130,978 / 1120,985 1135,1000 1120,1005 / 1100,940 1115,945 1110,960 / 1055,982 1045,1005 1028,1030`],
['m',9,`778,835 810,825 825,862 855,855 880,905 870,925 840,930 835,955 820,935 800,945 795,990 815,1045 825,1060 828,1068 810,1055 785,1015 795,960 778,890 / 845,785 880,770 895,800 880,825 880,850 920,910 925,975 880,1025 870,1015 885,995 903,985 900,920 895,890 860,830 860,810 848,805`],
['i',9,`810,795 830,785 842,810 860,830 900,900 895,925 880,920 882,890 855,855 825,862`],
['s',9,`840,932 870,927 903,925 900,960 880,985 848,985`],
['y',9,`922,1150 955,1155 990,1150 1015,1100 1032,1110 1035,1150 1025,1180 1010,1235 985,1225 945,1225 922,1195 / 750,1080 775,1085 815,1130 850,1165 865,1210 885,1220 878,1270 840,1230 820,1200 800,1155 770,1115 / 880,1275 950,1290 990,1310 985,1320 920,1305 885,1290 / 1060,1160 1075,1152 1120,1160 1065,1170 1060,1190 1090,1190 1075,1210 1098,1250 1085,1255 1070,1210 1072,1270 1060,1265 1048,1225 1062,1195 / 1210,1182 1240,1185 1240,1210 1225,1215 1250,1238 1290,1198 1328,1215 1328,1328 1295,1305 1310,1295 1290,1270 1245,1240 1235,1230 1220,1240 1220,1215 1235,1205 1210,1195 / 1160,1140 1165,1160 1155,1175 / 1165,1225 1195,1228 1170,1232`],
['m',9,`1328,1215 1370,1238 1400,1270 1415,1280 1405,1290 1425,1320 1450,1350 1415,1340 1385,1305 1355,1310 1355,1330 1328,1328 / 1430,1275 1460,1265 1475,1245 1475,1260 1460,1280 / 1110,1350 1130,1325 1150,1320 1120,1345`],
['g',3,`505,1025 545,995 605,975 615,965 630,930 650,925 660,900 690,875 710,880 730,890 745,850 775,850 775,830 800,840 832,845 820,890 860,920 890,940 900,930 910,850 920,820 935,870 960,895 965,925 975,960 1010,1000 1025,1030 1045,1040 1070,1070 1078,1140 1070,1190 1045,1240 1030,1270 1025,1325 995,1335 980,1350 965,1335 930,1345 890,1325 870,1280 850,1280 850,1260 855,1230 840,1245 825,1265 820,1240 800,1210 750,1200 690,1215 640,1245 590,1250 560,1272 525,1250 535,1210 520,1150 505,1085 515,1080 / 1355,1258 1372,1272 1385,1320 1400,1335 1435,1330 1425,1350 1405,1375 1368,1375 1395,1350 1385,1325`],
['e',10,`35,155 40,142 70,142 72,172 85,180 70,205 60,212 35,210 28,195 50,170 / 340,105 370,108 368,132 320,133 355,130`],
['m',10,`72,142 88,142 85,170 75,172 / 62,212 75,203 95,222 70,220`],
['d',10,`75,200 95,178 150,178 168,192 130,210 110,230 95,215`],
['g',10,`150,58 205,45 240,55 270,75 290,92 325,98 275,103 260,85 240,70 205,58 150,68 / 370,106 395,108 425,128 375,145 / 262,130 290,140 270,146 / 445,130 470,137 450,140 / 103,232 145,195 170,192 162,262 125,260 / 132,262 165,265 178,290 200,300 215,308 220,295 240,288 265,295 270,310 262,322 255,300 240,298 218,325 180,308 165,290 145,275 130,285 / 342,290 378,250 372,268 385,265 402,250 440,270 500,275 500,265 535,265 535,285 550,285 550,300 570,312 545,350 565,370 545,380 525,390 490,382 498,400 510,410 475,440 450,435 438,410 445,395 440,350 408,350 400,335 362,332 / 670,357 688,355 710,380 695,415 665,412 / 225,440 250,430 305,452 308,472 250,520 250,535 220,525 232,495 215,475`],
['m',10,`268,310 290,300 315,262 345,262 372,240 378,248 365,258 342,290 362,332 400,335 408,350 440,350 438,395 440,418 402,425 402,445 410,470 400,500 385,490 345,495 325,460 250,430 248,415 265,405 278,380 268,340`],
['d',10,`570,312 595,325 595,345 612,348 610,380 622,420 585,432 568,410 572,375 548,352`],
['m',10,`402,425 438,418 450,435 475,440 510,410 495,390 525,390 565,370 572,410 585,432 665,412 695,415 718,385 722,410 740,435 735,450 720,460 695,480 728,480 750,480 748,497 780,465 800,465 832,490 835,500 865,497 925,507 957,537 982,538 1000,570 992,608 950,655 945,665 928,675 927,760 915,800 890,842 878,855 830,855 780,892 760,903 765,960 740,992 700,1025 697,1050 650,1010 610,992 675,920 668,872 645,870 640,840 605,838 605,770 600,737 568,732 558,688 495,665 475,622 425,640 400,645 388,618 350,620 328,580 350,535 400,525 410,470 / 615,352 668,352 665,412 625,422 607,380 / 400,645 425,640 460,620 475,622 480,650 495,665 558,688 568,732 600,737 607,795 535,795 525,840 495,848 460,838 443,862 420,810 415,770 410,745 415,700 422,668 / 443,862 460,838 495,848 525,842 555,875 605,900 592,938 632,945 665,915 675,905 675,925 612,992 600,1010 597,1068 627,1125 610,1162 555,1178 535,1172 530,1205 385,1205 388,1165 378,1130 392,1110 388,1085 398,1082 388,1010 400,970 415,935 430,932 425,888 / 728,465 740,455 762,465 745,480`],
['y',10,`308,455 325,465 345,495 385,490 402,512 400,525 350,535 345,560 328,580 350,620 388,618 400,645 422,668 415,700 415,745 395,768 360,742 320,728 290,698 285,662 250,600 232,575 210,550 212,522 248,537 260,510 308,472`],
['g',10,`535,795 590,788 605,800 605,838 640,840 648,872 668,872 665,915 632,945 592,938 605,900 555,875 525,842 / 612,992 650,1010 685,1045 662,1088 630,1088 598,1070 600,1005`],
['z',10,`395,768 405,762 415,772 420,810 443,862 425,888 430,932 415,935 400,970 388,1010 398,1082 388,1110 378,1130 388,1165 385,1205 345,1205 333,1145 350,1125 352,1100 375,1045 370,1000 392,905 388,860 398,830`]
];
const lakes = [
[4,`715,792 745,785 770,770 765,785 785,795 750,802 740,815 730,820 735,800 / 805,905 825,888 875,875 855,895 850,905 815,915 / 985,1060 1005,1065 1020,1112 1008,1110 998,1085 / 865,960 895,950 890,956 / 1080,1165 1110,1150 1150,1160 1150,1168 1110,1170 / 1122,1205 1132,1192 1152,1188 1138,1210 1135,1245 1125,1248 / 1165,1185 1205,1195 1195,1212 1180,1212 / 1300,770 1318,775 1308,792 / 1305,820 1315,828 1305,830`],
[8,`775,1235 770,1285 745,1320 718,1335 760,1290 / 685,550 700,550 732,530 705,560 692,570`],
[6,`795,560 815,555 830,575 820,595 805,590 / 865,515 875,530 890,560 880,560`],
[10,`368,282 373,270 382,280 376,296`]
];
// Fjords, archipelagos and island chains that show only as outlines
const coasts = [
[6,`355,560 375,545 360,530 385,530 375,515 400,505 410,490 425,495 430,475 455,465 450,455 470,440 462,430 480,415 475,400 490,395 480,380 500,370 488,352 510,340 500,330 525,320 515,310 545,305 530,290 560,290 540,275 515,282 550,268 535,250 570,262 560,245 585,240 575,230 600,225 590,190 610,205 600,218 625,215 620,185 640,195 655,170 665,180 670,165 690,160 690,145 705,155 700,190 715,155 720,140 728,175 740,150 750,160 745,142 / 755,195 775,205 780,215 800,205 820,215 835,212 / 148,690 170,658 155,680 172,685 150,690 165,700 / 165,745 185,735 175,725 / 150,525 160,520 155,532 / 245,605 258,575 255,595 / 215,640 232,630 / 118,150 136,136 / 430,695 450,685 / 440,735 460,750 480,735 / 610,597 680,605 / 290,1170 340,1148 / 685,1205 740,1235 / 700,1130 720,1160 700,1180 725,1200 / 490,1010 580,1080 / 163,907 200,895 / 95,850 110,842`],
[4,`545,935 570,960 585,945 605,955 590,985 612,975 600,1005 625,995 605,1020 635,1010 620,1035 645,1030 635,1050 660,1045 650,1065 665,1062 655,1080 675,1075 670,1095 685,1090 680,1108 700,1100 695,1120 715,1105 712,1130 730,1120 725,1150 735,1145 733,1168 728,1150 / 615,1052 625,1060 620,1068 636,1085 / 102,1102 112,1094 / 118,1095 135,1092 / 140,1088 165,1085 / 178,1082 188,1080 / 195,1076 240,1055 290,1028 / 300,1030 320,1015 / 310,1498 325,1500 / 336,1505 355,1512 / 170,925 178,930 / 205,800 215,802 / 1215,695 1225,690 1218,715 / 1205,1005 1215,1015 1210,990 / 812,742 830,735 850,745 870,738 895,750 / 1335,720 1360,740 1350,745 1385,760 1375,770 1410,775 1390,785 1410,800 1385,800 / 1240,600 1265,612 1255,625 1285,630 1275,645 1305,650 1295,665 1325,665 1315,680 1345,690 1330,700 / 1180,690 1200,700 1230,715 / 1155,1495 1180,1488 / 1225,1440 1240,1445 1255,1470 1262,1465 / 1270,1490 1305,1505`],
[5,`355,770 370,790 360,805 375,820 368,830 / 378,880 395,895 380,905 400,915 385,930 405,940 395,955 420,945 415,965 440,975 430,990 / 415,1080 440,1090 415,1100 450,1105 412,1115 450,1120 408,1130 455,1140 405,1160 440,1175 410,1190 440,1200 / 430,1220 455,1230 432,1245 460,1250 435,1265 / 890,515 888,560 / 905,470 900,495 / 905,575 900,560 / 1305,480 1310,510 1325,530 / 515,1385 550,1390 535,1400 / 1030,980 1042,967 / 1520,490 1530,495 / 1545,485 1568,480 / 1500,660 1512,648 / 1418,788 1422,795`],
[8,`435,225 450,235 / 610,330 618,337 / 565,405 572,400 / 630,412 645,403 / 738,325 752,335 / 740,385 750,392 / 490,505 495,518 / 500,580 515,582 / 338,735 342,755 / 1165,433 1180,436 / 1250,403 1253,408 / 1210,462 1215,468 / 1088,570 1088,592 / 1040,490 1042,505 / 1038,575 1045,585 / 1345,1243 1352,1252 / 1362,1255 1366,1262 / 1412,1300 1425,1306 / 1440,1310 1445,1313 / 1462,1325 1482,1335 / 1325,1155 1332,1145 / 1248,1350 1238,1370 / 1232,1378 1225,1400 / 1218,1415 1212,1430 / 1195,1445 1190,1455 / 1175,1462 1140,1500 / 170,175 172,195 185,198 / 0,178 6,176`],
[9,`1185,565 1192,600 / 1165,695 1152,710 / 1185,665 1180,680 / 1385,925 1388,912 / 1390,870 1387,855 / 720,925 712,975 / 716,1005 718,1015 / 726,1045 728,1060 / 755,1110 765,1130 / 780,1165 790,1185 / 800,1200 805,1210 / 1000,1315 1030,1325 1050,1318 1070,1320 / 1085,1315 1110,1318 / 1045,1335 1070,1340 / 865,1215 895,1220 / 840,1160 865,1158 850,1170 / 1500,1270 1520,1295 1560,1310 / 1200,1180 1215,1215 / 1135,1235 1150,1232 / 1160,1165 1175,1160 / 1435,1198 1445,1205 / 1455,1215 1470,1225 / 1200,1370 1230,1372 / 1340,1360 1350,1378`],
[7,`98,158 115,160 / 85,235 88,245 / 110,252 120,245 / 150,248 165,232 / 0,468 8,475 / 1065,838 1068,860 / 1130,950 1138,956 / 1155,965 1168,975 / 1305,538 1318,538 / 780,60 850,85 / 950,115 980,112 / 500,745 508,752 / 540,690 545,700`],
[10,`250,5 262,10 / 265,20 270,30 / 285,20 292,28 / 305,35 312,42 / 320,45 345,60 / 340,80 350,72 / 365,75 380,78 / 515,140 522,152 / 530,158 536,168 / 545,170 550,180 / 554,195 555,210 / 548,232 543,245 / 400,240 412,242 / 425,244 440,248 / 538,270 555,268 / 260,428 250,440 / 700,1025 725,990 / 30,455 50,465`],
[11,`208,1215 212,1228 / 225,1240 240,1248 / 248,1250 262,1255 / 0,1288 45,1303 75,1318 / 128,1345 140,1358 / 145,1360 155,1370 / 95,1388 135,1408 / 262,1370 298,1362 / 262,1372 285,1378 / 208,1515 232,1535`]
];
const specks = `370,563 373,567 377,571 385,569 391,577 405,590 440,572 446,578 446,601 415,612 437,575 450,603 362,600 390,512 395,515 392,568 411,615 420,618 435,590 443,586 1170,568 1187,576 1200,600 1234,608 1205,605 1178,582 1186,568 1190,573 1215,560 1225,580 1162,520 1140,512 1148,515 1150,540 1155,560 1161,535 968,545 968,548 968,552 968,556 968,560 969,567 1003,560 925,600 933,605 922,610 947,640 778,582 757,629 723,590 713,655 748,420 1030,515 1045,522 430,520 481,512 640,560 648,548 650,570 572,560 579,572 1290,655 780,445 892,610 912,540`;
const borders = [
[12,`13,1215 40,1218 75,1222 95,1240 128,1252 105,1270 98,1290 62,1290 50,1322 18,1330 25,1360 13,1378 / 128,1252 195,1228 240,1240 275,1243 285,1205 340,1218 345,1235 380,1235 430,1252 490,1250 515,1238 550,1243 530,1275 575,1278 590,1297 545,1305 520,1325 475,1330 470,1358 430,1370 380,1382 330,1368 250,1365 235,1340 175,1322 170,1285 128,1252 / 550,1243 585,1245 605,1212 602,1185 640,1175 685,1190 705,1245 730,1252 752,1278 810,1270 790,1320 758,1330 755,1362 715,1385 690,1385 655,1408 / 685,1440 715,1430`],
[13,`13,75 30,92 60,100 / 25,118 62,145 / 900,678 900,790 / 515,558 565,556 / 473,620 495,605 518,612 540,560`],
[11,`788,492 788,660 810,665 833,682 855,670 900,715 930,725 925,738 / 1015,810 1365,810 1420,822 1450,820 1500,840 1525,870 1520,890 1561,880 / 1088,975 1120,975 1170,988 1220,983 1255,1007 1290,1002 1335,1033 / 1400,1120 1420,1100 1450,1098 1440,1125 / 1440,1130 1470,1132 1510,1120`]
];

function toPath(sheet, text, close) {
  let [ox, oy, sx, sy] = sheets[sheet], out = '', start = true;
  for (const t of text.trim().split(/\s+/)) {
    if (t === '/') { if (close) out += 'Z'; start = true; continue; }
    if (t[0] === '@') { [ox, oy, sx, sy] = sheets[t.slice(1)]; continue; }
    const [x, y] = t.split(',').map(Number);
    out += (start ? 'M' : 'L') + (ox + x / sx).toFixed(1) + ' ' + (oy + y / sy).toFixed(1);
    start = false;
  }
  return out + (close ? 'Z' : '');
}
const path = (d, attrs) => `<path d="${d}" ${attrs}/>`;
const shapes = countries.map(([c, s, p]) => [C[c], toPath(s, p, true)]);
const all = shapes.map(s => s[1]).join('');
const water = lakes.map(([s, p]) => toPath(s, p, true)).join('');
let svg = '<defs>' + path(all, 'id="land" fill="#f2efe9" stroke="#f2efe9" stroke-width="2" stroke-linejoin="round" fill-rule="nonzero"') + path(water, 'id="water" fill="#aad3df"') + '</defs>';
for (const dx of [-2048, 2048]) svg += `<use href="#land" x="${dx}"/><use href="#water" x="${dx}"/>`;
svg += borders.map(([s, p]) => path(toPath(s, p, false), 'fill="none" stroke="#d3ccd6" stroke-width="3"')).join('');
svg += path(toPath(5, '800,38 820,50 815,68 850,72 878,105 850,145 790,160 830,150 855,115 850,90 820,72 795,85 / 430,140 443,122 460,190 440,175 / 480,110 495,100 537,200 510,190 / 80,48 100,38 125,45 110,55', true), 'fill="#f2efe9"');
svg += shapes.map(([f, d]) => path(d, `fill="${f}" stroke="#808080" stroke-width="2" stroke-linejoin="round"`)).join('');
svg += path(water, 'fill="#5fe878" fill-opacity="0.3"');
svg += path(toPath(10, '365,282 372,270 382,280 376,296', true), 'fill="#aad3df" stroke="#808080" stroke-width="2"');
svg += coasts.map(([s, p]) => path(toPath(s, p, false), 'fill="none" stroke="#808080" stroke-width="2"')).join('');
svg += specks.split(' ').map(t => { const [x, y] = t.split(',').map(n => Math.round(n * 2.2577)); return `<rect x="${x}" y="${y}" width="3" height="2" fill="#808080" fill-opacity="0.8"/>`; }).join('');
document.getElementById('map').innerHTML = svg;
</script>
</body>
</html>
